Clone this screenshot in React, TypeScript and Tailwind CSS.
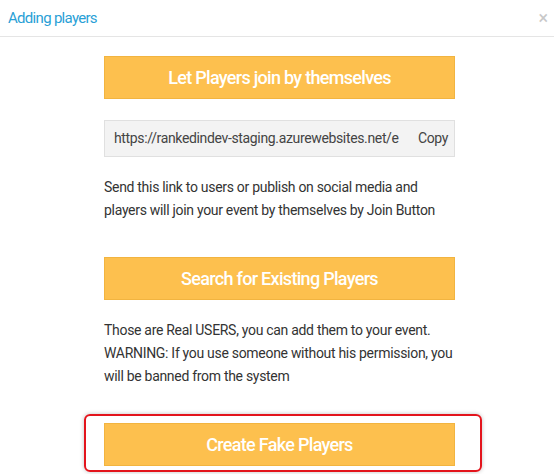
const FONT = "font-['Roboto',_'Liberation_Sans',_sans-serif]";

function YellowButton({ label }: { label: string }) {
  return (
    <button
      type="button"
      className="flex h-[43px] w-full items-center justify-center border border-[#f2b440] bg-[#fdc04e] text-[18px] font-medium tracking-[-0.7px] text-white"
    >
      {label}
    </button>
  );
}

export default function App() {
  return (
    <div className={`${FONT} h-[474px] w-[554px] overflow-hidden bg-white`}>
      <div className="flex h-[37px] items-center justify-between border-b border-[#e5e5e5] pl-[8px] pr-[6px]">
        <h4 className="text-[15px] tracking-[-0.7px] text-[#2a9fd6]">Adding players</h4>
        <span className="text-[18px] leading-none text-[#c8c8c8]">×</span>
      </div>

      <div className="flex flex-col pl-[104px] pr-[99px] pt-[19px]">
        <YellowButton label="Let Players join by themselves" />

        <div className="mt-[21px] flex h-[37px] items-center border border-[#e0e0e0] bg-[#f3f3f3] text-[14px] tracking-[-0.35px] text-[#444]">
          <span className="flex-1 overflow-hidden whitespace-nowrap pl-[9px]">
            https://rankedindev-staging.azurewebsites.net/e
          </span>
          <span className="pl-[12px] pr-[6px]">Copy</span>
        </div>

        <p className="mt-[19px] text-[14px] leading-[23px] tracking-[-0.3px] text-[#333]">
          Send this link to users or publish on social media and
          <br />
          players will join your event by themselves by Join Button
        </p>

        <div className="mt-[35px]">
          <YellowButton label="Search for Existing Players" />
        </div>

        <p className="mt-[19px] text-[14px] leading-[23px] tracking-[-0.3px] text-[#333]">
          Those are Real USERS, you can add them to your event.
          <br />
          WARNING: If you use someone without his permission, you
          <br />
          will be banned from the system
        </p>

        <div className="ml-[-20px] mr-[-27px] mt-[26px] rounded-[6px] border-2 border-[#e3141c] pb-[4px] pl-[18px] pr-[25px] pt-[7px] shadow-[0_0_4px_rgba(0,0,0,0.25)]">
          <YellowButton label="Create Fake Players" />
        </div>
      </div>
    </div>
  );
}
